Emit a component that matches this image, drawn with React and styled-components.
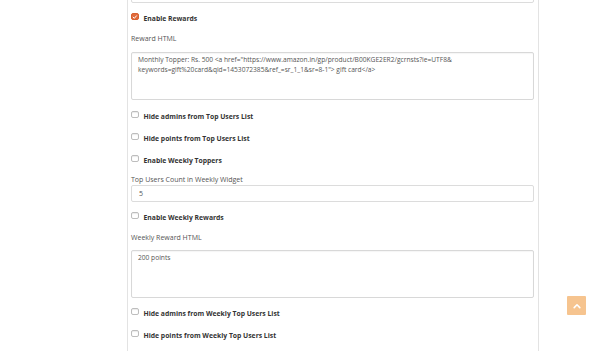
import React from "react";
import styled, { createGlobalStyle } from "styled-components";

const Global = createGlobalStyle`
  html, body { margin: 0; padding: 0; background: #fff; }
  body { font-family: "Open Sans", "Liberation Sans", sans-serif; color: #333; overflow: hidden; }
  * { box-sizing: border-box; }
`;

const Page = styled.div`
  width: 600px;
  height: 351px;
  overflow: hidden;
  position: relative;
  display: flex;
`;

const Panel = styled.div`
  margin-left: 127px;
  width: 412px;
  border-left: 1px solid #e3e3e3;
  border-right: 1px solid #e3e3e3;
  padding: 0 4px 0 3px;
  display: flex;
  flex-direction: column;
  margin-top: -14px;
`;

const TextInput = styled.div`
  height: ${(p) => p.$h || 17}px;
  border: 1px solid #dcdcdc;
  border-radius: 2px;
  font-size: 7px;
  color: #555;
  padding: 0 7px;
  display: flex;
  align-items: center;
  margin-top: ${(p) => p.$mt || 0}px;
`;

const TextArea = styled.div`
  height: 48px;
  border: 1px solid #d8d8d8;
  border-radius: 2px;
  font-size: 6.65px;
  line-height: 9.5px;
  color: #555;
  padding: 2px 6px;
  margin-top: ${(p) => p.$mt || 0}px;
  box-shadow: inset 0 1px 1px rgba(0, 0, 0, 0.04);
  white-space: nowrap;
`;

const CheckRow = styled.div`
  height: 22px;
  display: flex;
  align-items: center;
  gap: 5px;
  margin-top: ${(p) => p.$mt || 0}px;
  font-size: 6.8px;
  font-weight: 700;
  color: #333;
`;

const Box = styled.span`
  width: 7.5px;
  height: 7.5px;
  border-radius: 2px;
  display: inline-flex;
  align-items: center;
  justify-content: center;
  margin-top: -3px;
  background: ${(p) => (p.$on ? "#e06a3b" : "#fff")};
  border: 1px solid ${(p) => (p.$on ? "#d9602f" : "#bdbdbd")};
  box-shadow: ${(p) => (p.$on ? "none" : "inset 0 1px 1px rgba(0,0,0,0.08)")};
`;

const Label = styled.div`
  font-size: 7px;
  line-height: 10px;
  color: #555;
  margin-top: ${(p) => p.$mt || 0}px;
`;

const ToTop = styled.div`
  position: absolute;
  left: 567px;
  top: 296px;
  width: 19px;
  height: 19px;
  background: #f6c48f;
  border-radius: 1px;
  display: flex;
  align-items: center;
  justify-content: center;
`;

function Check({ on, children, mt }) {
  return (
    <CheckRow $mt={mt}>
      <Box $on={on}>
        {on && (
          <svg width="6" height="6" viewBox="0 0 10 10">
            <path d="M2 5.2 L4.2 7.4 L8.2 2.8" stroke="#fff" strokeWidth="1.8" fill="none" strokeLinecap="round" strokeLinejoin="round" />
          </svg>
        )}
      </Box>
      <span>{children}</span>
    </CheckRow>
  );
}

export default function App() {
  return (
    <Page>
      <Global />
      <Panel>
        <TextInput $h={17} />
        <Check on mt={4}>Enable Rewards</Check>
        <Label $mt={5}>Reward HTML</Label>
        <TextArea $mt={8}>
          Monthly Topper: Rs. 500 &lt;a href="https://www.amazon.in/gp/product/B00KGE2ER2/gcrnsts?ie=UTF8&amp;
          <br />
          keywords=gift%20card&amp;qid=1453072385&amp;ref_=sr_1_1&amp;sr=8-1"&gt; gift card&lt;/a&gt;
        </TextArea>
        <Check mt={5}>Hide admins from Top Users List</Check>
        <Check>Hide points from Top Users List</Check>
        <Check>Enable Weekly Toppers</Check>
        <Label $mt={4}>Top Users Count in Weekly Widget</Label>
        <TextInput $h={17} $mt={0}>5</TextInput>
        <Check mt={4}>Enable Weekly Rewards</Check>
        <Label $mt={5}>Weekly Reward HTML</Label>
        <TextArea $mt={7}>200 points</TextArea>
        <Check mt={4}>Hide admins from Weekly Top Users List</Check>
        <Check>Hide points from Weekly Top Users List</Check>
      </Panel>
      <ToTop>
        <svg width="8" height="6" viewBox="0 0 8 6">
          <path d="M1.2 4.6 L4 1.8 L6.8 4.6" stroke="#fff" strokeWidth="1.6" fill="none" strokeLinecap="round" strokeLinejoin="round" />
        </svg>
      </ToTop>
    </Page>
  );
}
